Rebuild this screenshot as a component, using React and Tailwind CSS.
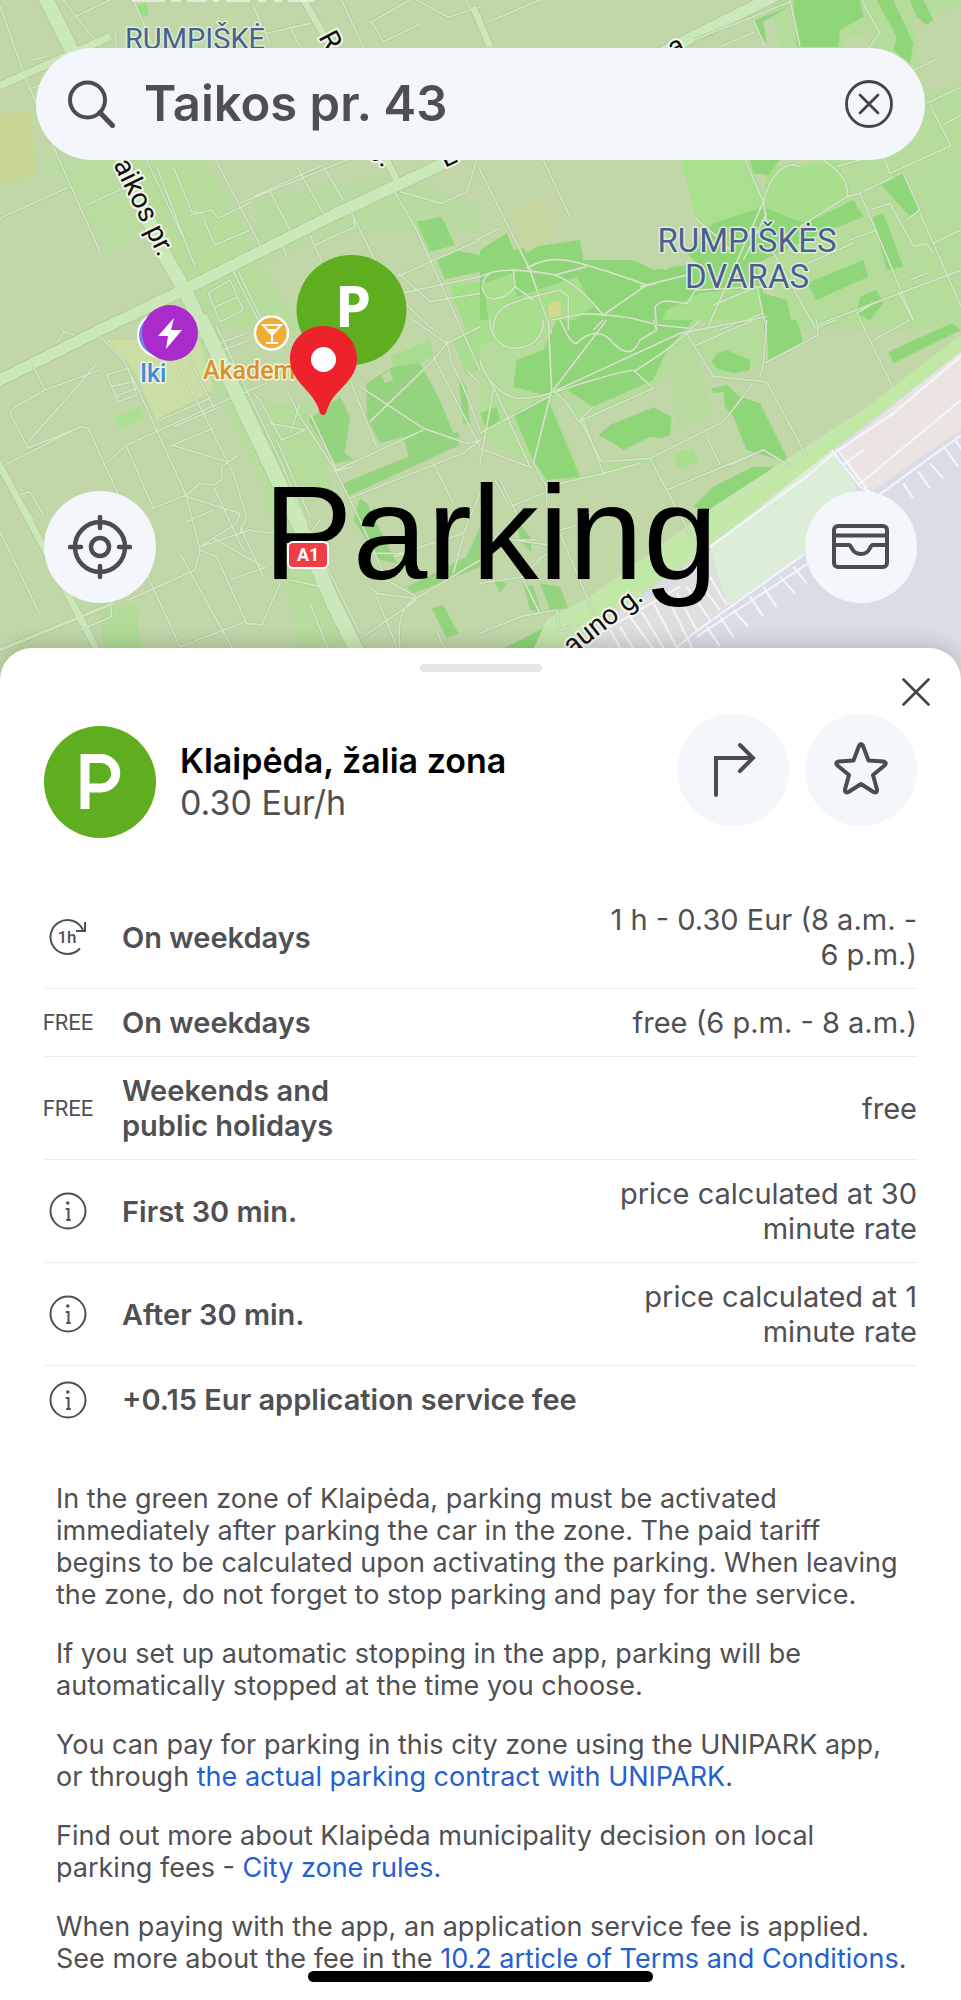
import React from "react";

const QUADRANTS = [
  {
    transform: "scale(0.33333)",
    areas: [
      ["#b7dc9c", "M350 480H620L900 990H600L480 760Z"],
      ["#b9dca0", "M120 480H340L420 700L330 760L200 560Z"],
      ["#c1d7a8", "M640 0H1440V140H700Z"],
      ["#c6d694", "M0 340L90 335L110 520L0 560Z"],
      ["#b9daa0", "M760 600L1200 520L1440 620V700L1000 700L780 800Z"],
      ["#9ddb84", "M410 15L440 10L445 45L418 48Z"],
      ["#91d67b", "M1250 665L1325 650L1365 735L1290 755Z"],
      ["#91d67b", "M1310 780L1370 752L1440 765V815L1335 838Z"],
      ["#a3de89", "M1350 855L1440 845V990H1400L1362 905Z"],
    ],
    major: [
      ["M130 -20L235 190L490 760L555 870L620 1010", 42],
      ["M-20 265L150 190L330 110", 22],
      ["M-20 1150L300 990L555 868L1000 645L1440 440L2060 120L2380 -40", 34],
      ["M900 -20L980 120L1190 540", 20],
    ],
    minor: [
      "M-10 -10L70 215L160 440L300 755", "M0 655L205 562", "M260 615L370 565", "M190 0L300 140", "M225 50L350 -10",
      "M1020 -10L1085 130L1130 240", "M1115 65L1230 0M1115 65L1150 125L1265 70M1250 0L1345 52L1440 20", "M1395 -10L1440 90",
      "M440 480L560 735M470 500L585 800M520 500L575 635L610 640", "M570 645L635 630L655 655L755 605", "M610 655L645 735L750 690", "M650 485L780 735",
      "M720 610L1040 480M760 590L980 490", "M810 575L870 690M890 500L970 640M970 500L1030 600M840 715L860 770",
      "M1200 575L1325 610L1400 575L1430 480", "M1180 570L1245 680L1440 1110", "M1055 640L1160 850M930 705L965 785M945 735L1065 680L1060 655",
      "M1190 830L1440 720M1200 880L1440 830M1195 820L1290 905L1440 880M1215 910L1300 990",
      "M625 880L690 840L730 930L660 965ZM645 920L715 890", "M700 815L790 990M715 815L800 990", "M345 90L350 140M400 0L460 140M760 20L810 130M870 80L900 140M800 100L930 70",
      "M80 270L160 240M95 180L140 170",
    ],
  },
  {
    transform: "translate(480 0) scale(0.33333)",
    areas: [
      ["#b5dc9b", "M870 0H1443V990H950L860 800L1000 560Z"],
      ["#c1d7a8", "M1300 60L1443 20V250L1330 290Z"],
      ["#c1d7a8", "M1100 110L1180 105L1160 145H1090Z"],
      ["#a9e08e", "M600 480H800L870 620L660 690Z"],
      ["#a7df8c", "M860 500L1080 490L1100 590L960 680L850 620Z"],
      ["#8fd679", "M940 0H1140L1150 50L1080 90L1075 140H950Z"],
      ["#8fd679", "M825 60L925 20L850 65L860 130L830 90Z"],
      ["#8fd679", "M1190 0H1240L1300 130L1290 190L1240 150L1250 110Z"],
      ["#8fd679", "M1290 0H1330L1360 60L1340 75L1310 50Z"],
      ["#8fd679", "M810 480H900L865 525L820 520Z"],
      ["#8fd679", "M0 750L80 700L100 750L300 720L310 780L450 780L560 810L700 670L850 620L920 650L980 670L1120 600L1150 650L1000 710L830 790L850 880L920 900L940 990H0Z"],
      ["#a7df8c", "M10 850L100 820L110 890L290 830L340 920L240 990H30Z"],
      ["#a7df8c", "M530 990L560 930L660 880L840 860L850 990Z"],
      ["#8fd679", "M1205 555L1270 520L1320 625L1290 650Z"],
      ["#8fd679", "M1180 650L1210 640L1270 800L1220 810Z"],
      ["#8fd679", "M980 850L1150 780L1165 830L1010 900Z"],
      ["#8fd679", "M1140 890L1190 870L1210 910L1170 960L1130 940Z"],
      ["#d3d890", "M205 910L240 900L245 945L205 955Z"],
      ["#c5d6a0", "M50 560L90 620L200 590L240 640L200 720L140 760L80 640Z"],
      ["#c1d7a8", "M480 790L600 740L650 790L520 810Z"],
    ],
    major: [["M-20 20L30 140", 20]],
    minor: [
      "M15 70L180 0", "M190 480L272 655", "M-5 500L150 810L215 1000", "M-10 720L60 685", "M930 0L960 140", "M640 120L820 50L930 5M820 60L855 140M720 140L825 95",
      "M1140 -10L1200 100L1165 145", "M1290 215L1372 177", "M1340 310L1443 262M1350 315L1412 438L1230 520L1210 470M1390 375L1443 345",
      "M795 480L850 605L860 665M850 605L680 990M860 640L790 780", "M960 500C920 480 870 520 850 605", "M1030 480C1090 520 1110 560 1100 590L960 680", "M1070 500L1140 480",
      "M1100 590L1140 580L1240 530M1140 580L1200 720L1300 960M1270 520L1320 630L1280 660M1170 630L1230 610L1300 740L1340 730L1360 760", "M1360 730L1443 690M1360 730L1443 920M1320 640L1360 730",
      "M870 740L1010 990M1010 975L1443 810M1110 720L1190 690M960 800L1120 730", "M1290 840L1340 820M1255 875L1300 960M1180 910L1130 940L1160 990",
      "M140 805C220 760 260 770 500 855L640 820M0 830C60 800 140 810 225 825L320 800M225 825C290 850 330 900 370 945L500 855", "M215 960C280 950 300 935 370 945C450 950 480 960 530 975L680 990M370 960L340 990",
      "M40 990C40 920 90 910 140 895L240 870L265 890L265 990", "M100 810L105 860C80 890 60 900 30 895C0 880 0 840 30 820M105 860L160 900",
      "M530 990L525 920C550 890 590 910 620 910C640 890 640 870 650 870L850 860M700 915L830 860L860 990M720 990L850 940", "M640 650L700 700L760 760M480 860L530 850",
    ],
  },
  {
    transform: "translate(0 320) scale(0.33333)",
    areas: [
      ["#b8dc9e", "M540 0H640L900 560L1050 990H900L780 480Z"],
      ["#cbdfa5", "M320 60H600L640 210L470 300L400 150Z"],
      ["#abdf91", "M340 290L420 260L435 295L355 325Z"],
      ["#b1dc98", "M300 880L410 850L420 990H310Z"],
      ["#b5dc9b", "M800 250L930 250L1000 520L900 560L820 380Z"],
      ["#a8dc90", "M1170 110L1290 60L1300 110L1190 160Z"],
      ["#94d47e", "M925 300L1020 230L1050 290L1035 400L1060 420L1005 430Z"],
      ["#94d47e", "M1100 190L1180 140L1260 130L1380 350L1230 420L1210 350L1140 370L1100 290Z"],
      ["#c1d7a8", "M1145 165L1170 150L1180 180L1155 190ZM1275 130L1300 115L1390 330L1360 340Z"],
      ["#94d47e", "M1030 490L1370 350L1380 375L1040 530Z"],
      ["#94d47e", "M1375 170L1400 200L1410 310L1390 310Z"],
      ["#94d47e", "M1080 535L1100 550L1190 730L1140 720L1060 600Z"],
      ["#94d47e", "M1220 800L1400 710L1440 620V740L1240 820Z"],
      ["#94d47e", "M1295 865L1330 855L1375 940L1340 955Z"],
      ["#a8dc90", "M1360 60L1440 0V150L1400 170Z"],
    ],
    major: [
      ["M600 -10L680 160L900 620L1000 850L1080 1010", 44],
      ["M-20 400L130 680L280 970L300 1010", 20],
      ["M0 990L340 850", 10],
    ],
    minor: [
      "M-10 615L118 880", "M60 525L90 515L130 585M60 540L100 600", "M15 435L240 320L265 325L380 580M30 280L85 385L240 322M30 280L40 265L135 210L100 140M135 210L300 150M85 365L240 190L290 130",
      "M175 65L190 35L225 45", "M300 50L370 120L420 220L560 530L600 690L650 710L740 910L785 915L840 790", "M320 165L385 145L410 225L355 245ZM335 200L400 185M345 230L410 205",
      "M320 430L380 375L680 240L800 190", "M380 380L460 565L560 525L600 490L640 495L665 480L665 440L715 405", "M515 375L680 425M505 380L640 325M520 320L660 260M480 300L640 230",
      "M540 140L700 460L740 590L720 640M570 120L640 260", "M560 530L720 580L710 610L600 680L750 630C790 640 810 640 830 635M560 605L640 570M640 655L790 740M720 620L790 770M640 500L730 690",
      "M600 690L585 750L385 840M430 740L540 980L735 905M540 700L700 990M330 830L335 890L240 930M690 780L800 740", "M620 20L780 340L930 640L960 600M650 20L840 420L920 610M830 360L930 590",
      "M760 220L780 240L845 360L915 330L810 310M870 340L900 250M860 210L900 290L1000 440L1080 600L1160 780L1250 830", "M930 280L1010 450L1270 330M1050 180L1130 380M1080 200L1270 325L1400 370L1440 360M1110 305L1300 120",
      "M1000 455L1060 440M1050 535L1390 400L1440 360M1300 430L1360 550", "M1340 60L1355 130L1390 200L1440 330M1300 110L1440 380M1240 0L1340 70L1300 120", "M1400 150L1440 190M1340 70L1440 20",
      "M1090 700L1200 700L1390 640L1440 520M1390 650L1360 760M1180 710L1250 690M1110 800L1130 820L1250 835L1440 720M1130 830L1190 980M1090 950L1250 840M1200 990C1190 900 1210 850 1250 835M1310 930L1330 980",
      "M930 850L985 990M870 780L960 800L1050 990M980 740L1080 940M940 740L1060 980M660 70L740 40M670 90L750 60",
    ],
  },
  {
    transform: "translate(480 320) scale(0.33333)",
    areas: [
      ["#a7df8c", "M0 0H230L220 210L0 330Z"],
      ["#b5dc9b", "M0 0H850L860 130L700 190L540 420L240 490L0 350Z"],
      ["#8fd679", "M230 0H640L560 90L520 180L340 260L260 210L210 230L100 200L110 120L190 90Z"],
      ["#a7df8c", "M0 0H190L180 60L100 90L40 60L0 80Z"],
      ["#8fd679", "M100 280L200 230L300 470L200 480L150 400Z"],
      ["#c1d7a8", "M220 250L260 230L360 440L310 470Z"],
      ["#c1d7a8", "M310 300L530 200L640 90L720 180L860 190L980 400L860 390L510 415L370 430Z"],
      ["#b9da9f", "M560 110L650 90L700 290L590 330Z"],
      ["#8fd679", "M355 345L390 315L520 262L575 290L570 345L540 355L510 350L430 390L400 370Z"],
      ["#8fd679", "M695 125L710 100L740 90L810 120L810 150L760 160L710 145Z"],
      ["#8fd679", "M695 205L740 195L780 230L840 250L930 430L800 390L760 290L735 260L730 215L700 220Z"],
      ["#8fd679", "M860 0H950L970 65L865 120Z"],
      ["#8fd679", "M1225 95L1415 10L1443 30L1240 130Z"],
      ["#a7df8c", "M580 400L640 385L655 425L595 450Z"],
      ["#8fd679", "M640 560L700 500L820 440L940 440L720 585Z"],
      ["#c1d7a8", "M250 490L500 430L620 650L660 680L340 860L240 640Z"],
      ["#94d47e", "M110 600L150 650L155 700L120 660Z"],
      ["#94d47e", "M180 790L240 800L265 865L210 870ZM130 790L150 870L185 880L160 800ZM40 780L80 790L60 820Z"],
      ["#8fd679", "M60 990L240 900L230 990Z"],
      ["#8fd679", "M0 280L50 260L60 300L20 330Z"],
      ["#c5e6ae", "M1500 20L1240 210L700 560L330 830L200 900L150 1010H1500Z"],
      ["#dadde7", "M1500 0L1443 60L1240 210L1060 390L700 680L330 930L240 1080H1500Z"],
      ["#c1e8a5", "M1500 0L1240 200L980 405L400 790L240 930L370 880L1060 390L1443 95L1500 40Z"],
      ["#ece4e3", "M1500 50L1443 95L1075 390L1135 490L1180 510L1500 290Z"],
      ["#dcedd8", "M690 680L1055 390L1130 500L970 710L740 860Z"],
      ["#dfdfe0", "M330 935L600 780L690 690L745 860L630 940L560 1010H200Z"],
    ],
    major: [],
    minor: [
      "M0 120C20 190 80 240 130 235C180 230 210 220 220 215L600 40L860 -10M205 0L215 210L160 430L200 500L200 560M340 260L300 300L365 425L510 415L730 305L820 190", "M220 215C250 230 270 260 295 305L520 205L460 150M230 215C330 180 440 150 470 150L560 90L620 40",
      "M220 210L380 0M240 0C260 40 270 70 290 70C330 30 370 30 400 70C430 100 460 110 480 60L530 30L520 0M30 0C30 60 70 85 110 85C170 80 190 40 190 0M0 130L45 210L150 440M40 210L0 430M0 340L215 225M0 385L160 445",
      "M660 0L620 40L700 170L860 185L980 410M650 75L820 0M860 0L850 130L840 170M855 130L1015 45L1010 0M1015 20L1070 0M1140 0L1240 205M1180 60L1290 0",
      "M310 300L370 460M510 415L560 510L650 680M560 510L850 390L935 440M680 350L720 435M750 435L850 390M200 500L370 460L480 430",
      "M45 480L90 560L190 520M0 560L50 660L170 660M100 660L240 680M0 790L130 770L180 715L240 680M240 640L350 900M60 480L110 580M130 780L180 880M240 630L350 600M0 940L120 890L230 870L240 930L300 910",
    ],
    white: [
      "M690 680L980 470L1060 400L1240 280L1500 60", "M1055 390L1140 500L1180 520M1070 385L1170 520M1090 435L1150 390M1135 495L1310 350L1443 240", "M1190 530L1443 345M970 705L640 940L560 1010M1000 720L650 950",
      "M1270 490L1300 535M1315 455L1350 505M1350 430L1390 475M1395 385L1435 440M1425 360L1460 410M940 740L980 790M900 770L945 820M850 800L890 860M810 830L850 890M760 870L805 920M720 890L760 950M680 920L720 980",
      "M690 770L740 855M660 790L720 870M620 800L690 900M590 820L650 930M600 800L270 990M560 830L640 990M520 850L600 1000M485 875L560 1000M450 890L530 1000M420 920L470 1000M390 930L430 1000",
    ],
  },
];

function MapBackground() {
  return (
    <svg
      className="absolute inset-0 h-full w-full"
      viewBox="0 0 961 680"
      preserveAspectRatio="xMidYMin slice"
      role="img"
      aria-label="Map of Klaipėda"
    >
      <rect width="961" height="680" fill="#c1d7a8" />
      {QUADRANTS.map((q) => (
        <g key={q.transform} transform={q.transform}>
          {q.areas.map(([fill, d]) => (
            <path key={d} d={d} fill={fill} />
          ))}
        </g>
      ))}
      {QUADRANTS.map((q) => (
        <g key={q.transform} transform={q.transform} fill="none" strokeLinejoin="round">
          <g stroke="#a9bd98" strokeWidth="9" opacity="0.6">
            {q.minor.map((d) => (
              <path key={d} d={d} />
            ))}
            {q.major.map(([d, w]) => (
              <path key={d} d={d} strokeWidth={w + 5} />
            ))}
          </g>
          <g stroke="#cfe9c0" strokeWidth="5">
            {q.minor.map((d) => (
              <path key={d} d={d} />
            ))}
          </g>
          <g stroke="#cbe8b8">
            {q.major.map(([d, w]) => (
              <path key={d} d={d} strokeWidth={w} />
            ))}
          </g>
          {q.white && (
            <g stroke="#f4f6fb" strokeWidth="6">
              {q.white.map((d) => (
                <path key={d} d={d} />
              ))}
            </g>
          )}
        </g>
      ))}
      <path d="M132 1H165M171 1h10M187 1h20M213 1h6M226 1h24M258 1h8M274 1h8M288 1h26" stroke="#eef6e8" strokeWidth="2" opacity="0.7" />
      <g className="font-[Roboto,sans-serif]" fill="#4a5e92" stroke="#dcefd0" strokeWidth="3" paintOrder="stroke" strokeLinejoin="round">
        <text x="125" y="49" fontSize="29">RUMPIŠKĖ</text>
        <text x="747" y="252" fontSize="33" textAnchor="middle">RUMPIŠKĖS</text>
        <text x="747" y="288" fontSize="33" textAnchor="middle">DVARAS</text>
      </g>
      <g className="font-[Roboto,sans-serif]" fill="#111" stroke="#f0f7ea" strokeWidth="4" paintOrder="stroke" strokeLinejoin="round" fontSize="28">
        <text transform="translate(113 164) rotate(64)">aikos pr.</text>
        <text transform="translate(318 37) rotate(62)">R</text>
        <text transform="translate(372 148) rotate(64)">g.</text>
        <text transform="translate(445 168) rotate(-26)">L</text>
        <text transform="translate(673 58) rotate(-26)">a</text>
        <text transform="translate(572 656) rotate(-38)">auno g.</text>
      </g>
      <g>
        <circle cx="160" cy="335" r="22" fill="#6a8be0" stroke="#fff" strokeWidth="2" />
        <circle cx="170" cy="333" r="28" fill="#aa2bcc" />
        <path d="M174 318L158 336H168L166 349L182 330H171Z" fill="#fff" />
        <circle cx="271.500" cy="333" r="16.500" fill="#f0ac35" stroke="#fff" strokeWidth="2.500" />
        <path d="M263 325H281L272 335ZM272 334V343M266 343H278" fill="none" stroke="#fff" strokeWidth="2" />
        <path d="M267 329H277L272 335Z" fill="#fff" />
      </g>
      <g className="font-[Roboto,sans-serif] font-medium" fontSize="25" stroke="#eef5df" strokeWidth="3" paintOrder="stroke" strokeLinejoin="round">
        <text x="140" y="382" fill="#4389dc">Iki</text>
        <text x="203" y="379" fill="#dc922a">Akadem</text>
      </g>
      <circle cx="351.500" cy="310" r="55" fill="#5eae1f" />
      <text x="353" y="327" fontSize="58" textAnchor="middle" fill="#fff" className="font-['Noto_Sans',sans-serif] font-bold">P</text>
      <path d="M323 415C319 415 320 410 316 403C308 388 290 379 290 359C290 340 305 326 323.500 326S357 340 357 359C357 379 338 388 330 403C326 410 327 415 323 415Z" fill="#ee222b" />
      <circle cx="323.500" cy="359.500" r="12.500" fill="#fff" />
    </svg>
  );
}

function SearchIcon() {
  return (
    <svg className="h-12 w-12 shrink-0" viewBox="0 0 48 48" fill="none" stroke="#4c4c4e" strokeWidth="4" strokeLinecap="round" aria-hidden="true">
      <circle cx="19.500" cy="20" r="17.500" />
      <path d="M32 32.500L44.500 45.500" strokeWidth="5" />
    </svg>
  );
}

function InfoIcon() {
  return (
    <svg className="h-[38px] w-[38px]" viewBox="0 0 38 38" fill="none" stroke="#505052" strokeWidth="2" strokeLinecap="round" aria-label="Info">
      <circle cx="19" cy="19" r="17.500" />
      <path d="M17.500 17H19.500V27.500M18 28H21" />
      <circle cx="18.800" cy="11" r="1.800" fill="#505052" stroke="none" />
    </svg>
  );
}

function HourIcon() {
  return (
    <svg className="h-[38px] w-[38px]" viewBox="0 0 38 38" fill="none" stroke="#505052" strokeWidth="2" aria-label="Hourly rate">
      <path d="M31 30.500A17 17 0 1 1 34 12" />
      <path d="M36 4V13H27" />
      <text x="18" y="24.500" textAnchor="middle" fontSize="17" fill="#505052" stroke="none" className="font-[Roboto,sans-serif] font-medium">1h</text>
    </svg>
  );
}

const FreeTag = () => <span className="font-[Roboto,sans-serif] text-[22px]">FREE</span>;

const RATES = [
  { icon: HourIcon, label: "On weekdays", value: "1 h - 0.30 Eur (8 a.m. - 6 p.m.)" },
  { icon: FreeTag, label: "On weekdays", value: "free (6 p.m. - 8 a.m.)" },
  { icon: FreeTag, label: "Weekends and public holidays", value: "free" },
  { icon: InfoIcon, label: "First 30 min.", value: "price calculated at 30 minute rate" },
  { icon: InfoIcon, label: "After 30 min.", value: "price calculated at 1 minute rate" },
  { icon: InfoIcon, label: "+0.15 Eur application service fee" },
];

function RoundButton({ label, children }) {
  return (
    <button type="button" aria-label={label} className="flex h-28 w-28 shrink-0 items-center justify-center rounded-full bg-[#f3f6fa]">
      {children}
    </button>
  );
}

function RateTable() {
  return (
    <table className="mt-12 w-full table-fixed border-collapse text-[29px] leading-[35px]">
      <tbody>
        {RATES.map(({ icon: Icon, label, value }, i) => (
          <tr key={i} className="border-b border-[#ececec] last:border-b-0">
            <td className="w-[78px] py-0 align-middle">
              <div className="flex w-12 justify-center">
                <Icon />
              </div>
            </td>
            <th scope="row" colSpan={value ? 1 : 2} className="py-4 text-left align-middle font-semibold">
              <div className={value ? "max-w-64" : ""}>{label}</div>
            </th>
            {value && <td className="w-[320px] py-4 text-right align-middle">{value}</td>}
          </tr>
        ))}
      </tbody>
    </table>
  );
}

export default function App() {
  return (
    <div className="relative flex min-h-screen flex-col bg-white font-[Inter,sans-serif] text-[#505052]">
      <header className="relative overflow-hidden pb-[77px]">
        <MapBackground />
        <div className="relative px-9 pt-12">
          <div className="flex h-28 items-center rounded-full bg-[#f3f6fa] px-8">
            <SearchIcon />
            <input
              type="text"
              aria-label="Search address"
              defaultValue="Taikos pr. 43"
              className="ml-7 min-w-0 flex-1 bg-transparent text-[49px] font-semibold text-[#4f4f51] outline-none"
            />
            <button type="button" aria-label="Clear search">
              <svg className="h-12 w-12" viewBox="0 0 48 48" fill="none" stroke="#444446" strokeWidth="2.800" strokeLinecap="round">
                <circle cx="24" cy="24" r="22.500" />
                <path d="M15 15L33 33M33 15L15 33" />
              </svg>
            </button>
          </div>
        </div>
        <div className="relative mt-[331px] flex items-center justify-between px-11">
          <RoundButton label="My location">
            <svg className="h-16 w-16" viewBox="0 0 64 64" fill="none" stroke="#4c4c4e" strokeWidth="4.500" strokeLinecap="round">
              <circle cx="32" cy="32" r="25" />
              <circle cx="32" cy="32" r="9" />
              <path d="M32 2V13M32 51V62M2 32H13M51 32H62" />
            </svg>
          </RoundButton>
          <h1 className="-my-12 pb-7 pl-5 font-['Liberation_Sans',sans-serif] text-[134px] leading-[156px] text-black">Parking</h1>
          <RoundButton label="Wallet">
            <svg className="h-12 w-[60px]" viewBox="0 0 60 48" fill="none" stroke="#4c4c4e" strokeWidth="4">
              <rect x="3" y="3" width="53" height="41" rx="4" />
              <path d="M3 12.500H56M3 22H18C21 22 20 31 30 31S38 22 42 22H56" />
            </svg>
          </RoundButton>
        </div>
        <span className="absolute top-[541px] left-[287px] rounded-md border-2 border-white bg-[#ee3d44] px-2 font-[Roboto,sans-serif] text-lg leading-6 font-bold text-white">
          A1
        </span>
      </header>

      <main className="relative -mt-8 flex-1 rounded-t-[32px] bg-white pt-4 shadow-[0_-4px_20px_rgba(0,0,0,0.16)]">
        <div className="mx-auto h-2 w-[122px] rounded-full bg-[#e6e6e6]" />
        <div className="mt-[6px] flex justify-end pr-[31px]">
          <button type="button" aria-label="Close">
            <svg className="h-7 w-7" viewBox="0 0 28 28" stroke="#444446" strokeWidth="2.600" strokeLinecap="round">
              <path d="M1.500 1.500L26.500 26.500M26.500 1.500L1.500 26.500" />
            </svg>
          </button>
        </div>

        <section className="mt-2 px-11">
          <div className="flex items-start">
            <div className="mt-3 flex h-28 w-28 shrink-0 items-center justify-center rounded-full bg-[#5eae1f]">
              <svg className="h-16 w-16" viewBox="0 0 64 64" aria-label="Parking zone">
                <path d="M17 59V8.500H33A14.500 14.500 0 0 1 33 38H17" fill="none" stroke="#fff" strokeWidth="9" />
              </svg>
            </div>
            <div className="mt-[26px] ml-6 flex-1 whitespace-nowrap">
              <h2 className="text-[34px] leading-[42px] font-semibold text-black">Klaipėda, žalia zona</h2>
              <p className="text-[34px] leading-[42px]">0.30 Eur/h</p>
            </div>
            <div className="flex gap-4">
              <RoundButton label="Directions">
                <svg className="h-16 w-16" viewBox="0 0 64 64" fill="none" stroke="#4c4c4e" strokeWidth="4" strokeLinecap="round">
                  <path d="M15 57V20H52M39 7L52 20L39 33" />
                </svg>
              </RoundButton>
              <RoundButton label="Favourite">
                <svg className="h-16 w-16" viewBox="0 0 64 64" fill="none" stroke="#4c4c4e" strokeWidth="4" strokeLinejoin="round">
                  <path d="M30 8Q32 4 34 8L39.500 22.500L54.500 23.500Q58.500 24.500 55.500 27.500L44 37L48 51.500Q48.500 55.500 44.500 54L32 46L19.500 54Q15.500 55.500 16 51.500L20 37L8.500 27.500Q5.500 24.500 9.500 23.500L24.500 22.500Z" />
                </svg>
              </RoundButton>
            </div>
          </div>
          <RateTable />
        </section>

        <section className="mt-[50px] flex flex-col gap-[27px] pr-11 pb-[22px] pl-14 text-[27px] leading-8">
          <p>
            In the green zone of Klaipėda, parking must be activated
            <br />
            immediately after parking the car in the zone. The paid tariff
            <br />
            begins to be calculated upon activating the parking. When leaving
            <br />
            the zone, do not forget to stop parking and pay for the service.
          </p>
          <p>
            If you set up automatic stopping in the app, parking will be
            <br />
            automatically stopped at the time you choose.
          </p>
          <p>
            You can pay for parking in this city zone using the UNIPARK app,
            <br />
            or through <a href="#contract" className="text-[#2560d0]">the actual parking contract with UNIPARK</a>.
          </p>
          <p>
            Find out more about Klaipėda municipality decision on local
            <br />
            parking fees - <a href="#rules" className="text-[#2560d0]">City zone rules.</a>
          </p>
          <p>
            When paying with the app, an application service fee is applied.
            <br />
            See more about the fee in the <a href="#terms" className="text-[#2560d0]">10.2 article of Terms and Conditions</a>.
          </p>
        </section>
      </main>
      <div className="absolute inset-x-0 bottom-[18px] mx-auto h-[11px] w-[345px] rounded-full bg-black" />
    </div>
  );
}
